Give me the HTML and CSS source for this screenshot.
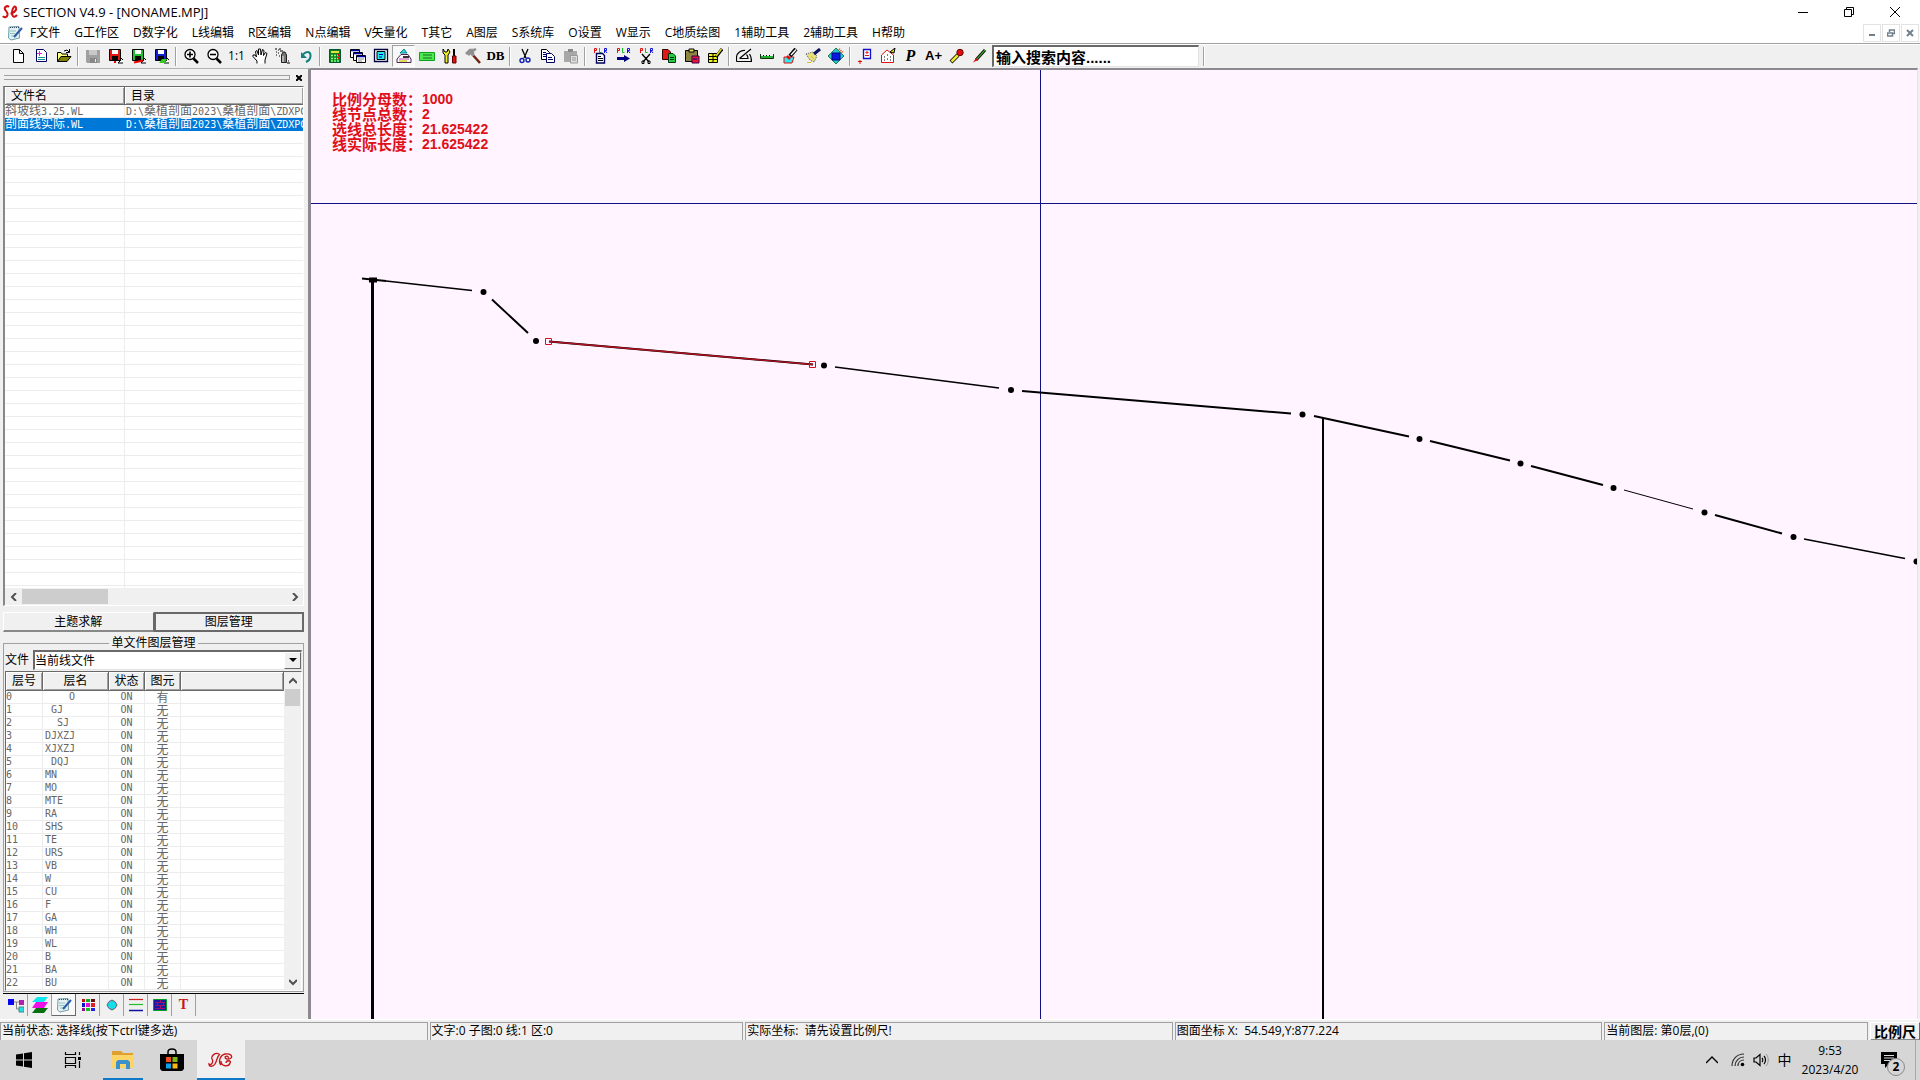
FILE: index.html
```html
<!DOCTYPE html>
<html lang="zh-CN">
<head>
<meta charset="utf-8">
<title>SECTION V4.9 - [NONAME.MPJ]</title>
<link rel="stylesheet" href="styles.css">
</head>
<body>
<header class="titlebar">
  <svg class="logo" viewBox="0 0 16 16"><path d="M7 3C5 1 2 3 3 5.500C4 7.500 6 8 5.500 11C5 13.500 2 14 1 12M8.500 9.500C12 9 15 6 14 3.500C13 1 10 4 10 8.500C10 13 12.500 14 15 11" fill="none" stroke="#d01010" stroke-width="2"/></svg>
  <h1 class="title">SECTION V4.9 - [NONAME.MPJ]</h1>
  <div class="winbtns">
    <button aria-label="最小化"><svg viewBox="0 0 10 10"><path d="M0 5.500H10" /></svg></button>
    <button aria-label="还原"><svg viewBox="0 0 10 10"><path d="M.5 2.500H7.500V9.500H.5ZM2.500 2.500V.5H9.500V7.500H7.500" /></svg></button>
    <button aria-label="关闭"><svg viewBox="0 0 10 10"><path d="M0 0L10 10M10 0L0 10" /></svg></button>
  </div>
</header>
<nav class="menubar">
  <svg class="note" viewBox="0 0 16 16"><path d="M2 2L12 1.500L12.500 13L4 15L1.500 13Z" fill="#e4f0f4" stroke="#6aa0a8"/><path d="M3 2.500H12" stroke="#446" stroke-dasharray="1 1"/><path d="M3 6H9M3 8.500H8M4 11H10" stroke="#8cc4b8"/><path d="M15 3L7 12" stroke="#2a5aa8" stroke-width="2"/></svg>
  <button>F文件</button><button>G工作区</button><button>D数字化</button><button>L线编辑</button><button>R区编辑</button><button>N点编辑</button><button>V矢量化</button><button>T其它</button><button>A图层</button><button>S系统库</button><button>O设置</button><button>W显示</button><button>C地质绘图</button><button>1辅助工具</button><button>2辅助工具</button><button>H帮助</button>
  <div class="mdibtns">
    <button aria-label="最小化窗口"><svg viewBox="0 0 8 8"><path d="M1 6H7" stroke-width="2"/></svg></button>
    <button aria-label="还原窗口"><svg viewBox="0 0 8 8"><path d="M2.500 3V1H7.500V4.500H6M.5 4H5.500V7H.5Z" stroke-width="1.500"/></svg></button>
    <button aria-label="关闭窗口"><svg viewBox="0 0 8 8"><path d="M1 1L7 7M7 1L1 7" stroke-width="2"/></svg></button>
  </div>
</nav>
<div class="toolbar" role="toolbar">
  <button aria-label="新建"><svg viewBox="0 0 16 16"><path d="M3.500 1.500H9.500L13.500 5.500V14.500H3.500ZM9.500 1.500V5.500H13.500" fill="#fff" stroke="#000"/></svg></button>
  <button aria-label="新建工程"><svg viewBox="0 0 16 16"><path d="M3.500 1.500H10.500L13.500 4.500V13.500H3.500Z" fill="#fff" stroke="#006"/><path d="M6.500 3V8M4 5.500H9" stroke="#e02ae0"/><path d="M5 9.500H12M5 11.500H12" stroke="#109090"/></svg></button>
  <button aria-label="打开"><svg viewBox="0 0 16 16"><path d="M1.500 13.500V4.500H5L6 6H11.500V8" fill="#ffff80" stroke="#000"/><path d="M1.500 13.500L5 8.500H15L11 13.500Z" fill="#808000" stroke="#000"/><path d="M8 3L11 2L13 4M13.500 1V4.500H10" fill="none" stroke="#000"/></svg></button>
  <i class="sep"></i>
  <button aria-label="保存"><svg viewBox="0 0 16 16"><path d="M1 2H15V15H2L1 14Z" fill="#a0a0a0"/><path d="M4 2H12V7H4Z" fill="#c8c8c8"/><path d="M5 10H12V15H5Z" fill="#888"/><path d="M10 11H11V14H10Z" fill="#eee"/></svg></button>
  <button aria-label="保存点"><svg viewBox="0 0 16 16"><path d="M1.500 1.500H12.500V12.500H1.500Z" fill="#e01818" stroke="#000"/><path d="M4 2H10V6H4Z" fill="#fff"/><path d="M4 8H10V13H4Z" fill="#000"/><path d="M12 9L15 12M13 12L10 15H15" fill="#fff" stroke="#000"/><path d="M6 13H8V15H6Z" fill="#e00"/></svg></button>
  <button aria-label="保存线"><svg viewBox="0 0 16 16"><path d="M1.500 1.500H12.500V12.500H1.500Z" fill="#20c030" stroke="#000"/><path d="M4 2H10V6H4Z" fill="#fff"/><path d="M4 8H10V12H4Z" fill="#000"/><path d="M12 9L15 12M13 12L10 15H15" fill="#fff" stroke="#000"/><path d="M3 14.500L12 12.500" stroke="#e00" stroke-width="2"/></svg></button>
  <button aria-label="保存区"><svg viewBox="0 0 16 16"><path d="M1.500 1.500H12.500V12.500H1.500Z" fill="#1020d0" stroke="#000"/><path d="M4 2H10V6H4Z" fill="#fff"/><path d="M4 8H10V12H4Z" fill="#000"/><path d="M12 9L15 12M13 12L10 15H15" fill="#fff" stroke="#000"/><path d="M5 15L8 11L13 11L11 15Z" fill="#38c820"/></svg></button>
  <i class="sep"></i>
  <button aria-label="放大"><svg viewBox="0 0 16 16"><path d="M10.500 10.500L15 15" stroke="#000" stroke-width="2.500"/><circle cx="7" cy="6.500" r="5" fill="#fff" stroke="#000" stroke-width="1.300"/><path d="M4 6.500H10M7 3.500V9.500" stroke="#000" stroke-width="1.600"/></svg></button>
  <button aria-label="缩小"><svg viewBox="0 0 16 16"><path d="M10.500 10.500L15 15" stroke="#000" stroke-width="2.500"/><circle cx="7" cy="6.500" r="5" fill="#fff" stroke="#000" stroke-width="1.300"/><path d="M4 6.500H10" stroke="#000" stroke-width="1.600"/></svg></button>
  <button class="one">1:1</button>
  <button aria-label="平移"><svg viewBox="0 0 16 16"><path d="M5 15.500V13L1 8.500V7H3L4.500 9L3.500 3.500L5 2.500L6.500 7L6.500 1L8.500 1L9 7L10.500 1.500L12 2.500L11.500 7.500L13.500 4.500L15 5.500L13 12V15.500" fill="#fff" stroke="#000"/></svg></button>
  <button aria-label="喷涂"><svg viewBox="0 0 16 16"><path d="M6.500 7L8 4H10L11.500 7V14.500H6.500Z" fill="#777" stroke="#222"/><path d="M8 8V14" stroke="#eee"/><path d="M0 1H2M3 2H4M1 4H2M4 1H6M5 3H8M3 5H4M1 7H2M4 8H5M13 13H14M12 15H15" stroke="#000"/></svg></button>
  <button aria-label="撤销"><svg viewBox="0 0 16 16"><path d="M4 8C7 3 12 3 12.500 7C13 11 10 13 8 14" fill="none" stroke="#108080" stroke-width="2"/><path d="M3 4V10H9Z" fill="#108080"/></svg></button>
  <i class="sep"></i>
  <button aria-label="计算器"><svg viewBox="0 0 16 16"><path d="M2.500 1.500H13.500V14.500H2.500Z" fill="#108020" stroke="#053"/><path d="M4 3H12V5H4Z" fill="#e0e040"/><path d="M4 7.500H12M4 10.500H12M4 13H12" stroke="#80ff80" stroke-width="1.500" stroke-dasharray="2 1"/><path d="M11 7H12M11 10H12" stroke="#e00" stroke-width="2"/></svg></button>
  <button aria-label="层叠窗口"><svg viewBox="0 0 16 16"><g fill="#fff" stroke="#000"><path d="M.5 1.500H9.500V9.500H.5Z"/><path d="M3.500 4.500H12.500V12.500H3.500Z"/><path d="M6.500 7.500H15.500V14.500H6.500Z"/></g><path d="M1 2.500H9M4 5.500H12M7 8.500H15" stroke="#0000a0" stroke-width="1.500"/><path d="M8 11H14M8 13H12" stroke="#888"/></svg></button>
  <button aria-label="窗口"><svg viewBox="0 0 16 16"><path d="M1.500 1.500H14.500V13.500H1.500Z" fill="#fff" stroke="#000040" stroke-width="1.300"/><path d="M4 3.500H12V11.500H4Z" fill="#20e8f0" stroke="#000"/><path d="M6 6.500H10M6 9H9" stroke="#0000a0"/></svg></button>
  <button class="pressed" aria-label="图车"><svg viewBox="0 0 16 16"><path d="M8 1L11 5H4Z" fill="#40d0e0" stroke="#088"/><path d="M1 14.500V11L5 6.500H12L15 11V14.500Z" fill="#fff" stroke="#502050"/><path d="M3 11H13" stroke="#c040b8"/><path d="M7 8H13V10H7Z" fill="#333"/><path d="M3 13H11" stroke="#d0d020" stroke-width="1.500"/></svg></button>
  <button aria-label="卡片"><svg viewBox="0 0 16 16"><path d="M.5 4.500H15.500V12.500H.5Z" fill="#50e850" stroke="#10a020"/><path d="M4 7H13M4 10H13" stroke="#107020"/></svg></button>
  <button aria-label="工具"><svg viewBox="0 0 16 16"><path d="M1 1L3 4H5L6 1L8 4L6 7V15H3V7L1 5Z" fill="#f0f020" stroke="#000"/><path d="M12 1V8" stroke="#000" stroke-width="2"/><path d="M10.500 8H14V15H10.500Z" fill="#e01010" stroke="#600"/></svg></button>
  <button aria-label="锤子"><svg viewBox="0 0 16 16"><path d="M7 6L15 15" stroke="#702010" stroke-width="2.500"/><path d="M1 6L5 2H9L11 1M3 7L8 3L8 8" fill="none" stroke="#909090" stroke-width="2.500"/></svg></button>
  <button class="db">DB</button>
  <i class="sep"></i>
  <button aria-label="剪切"><svg viewBox="0 0 16 16"><path d="M5 1L9 10M11 1L7 10" stroke="#000" stroke-width="1.300"/><circle cx="5" cy="12.500" r="2" fill="none" stroke="#1020b0" stroke-width="1.400"/><circle cx="11" cy="12" r="2" fill="none" stroke="#1020b0" stroke-width="1.400"/></svg></button>
  <button aria-label="复制"><svg viewBox="0 0 16 16"><path d="M1.500 1.500H6.500L9.500 4.500V11.500H1.500Z" fill="#fff" stroke="#000"/><path d="M6.500 5.500H11.500L14.500 8.500V14.500H6.500Z" fill="#fff" stroke="#000060"/><path d="M3 4.500H6M3 6.500H6M3 8.500H6M8 9.500H12M8 11.500H13" stroke="#000060"/></svg></button>
  <button aria-label="粘贴"><svg viewBox="0 0 16 16"><path d="M1 3H14V14H1Z" fill="#a8a8a8"/><path d="M5 1H10V4H5Z" fill="#888"/><path d="M7.500 7.500H14.500V15H7.500Z" fill="#ddd" stroke="#999"/><path d="M9 10H13M9 12H13" stroke="#999"/></svg></button>
  <i class="sep"></i>
  <button aria-label="点线区复制"><svg viewBox="0 0 16 16"><path d="M2.500 5V.5H4.500V2.500H3" fill="none" stroke="#e01010"/><path d="M7.500 0V4.500H9.500" fill="none" stroke="#10c020"/><path d="M12.500 5V.5H14.500V2.500H13L15 5" fill="none" stroke="#1010e0"/><path d="M4.500 5.500H10.500L12.500 7.500V15H4.500Z" fill="#fff" stroke="#000060" stroke-width="1.400"/><path d="M6 8.500H9M6 10.500H11M6 12.500H11" stroke="#000"/></svg></button>
  <button aria-label="点线区移动"><svg viewBox="0 0 16 16"><path d="M2.500 5V.5H4.500V2.500H3" fill="none" stroke="#e01010"/><path d="M7.500 0V4.500H9.500" fill="none" stroke="#10c020"/><path d="M12.500 5V.5H14.500V2.500H13L15 5" fill="none" stroke="#1010e0"/><path d="M2 9H9V7L15 10.500L9 14V12H2Z" fill="#000080"/></svg></button>
  <button aria-label="点线区剪切"><svg viewBox="0 0 16 16"><path d="M2.500 5V.5H4.500V2.500H3" fill="none" stroke="#e01010"/><path d="M7.500 0V4.500H9.500" fill="none" stroke="#10c020"/><path d="M12.500 5V.5H14.500V2.500H13L15 5" fill="none" stroke="#1010e0"/><path d="M4 6L11 14M12 6L5 14M8 9V12" stroke="#000" stroke-width="1.300"/><path d="M4 13H6V15.500H4ZM10 13H12V15.500H10Z" fill="none" stroke="#000"/></svg></button>
  <button aria-label="复制图元"><svg viewBox="0 0 16 16"><path d="M1.500 1.500H7L9.500 4V11.500H1.500Z" fill="#e01818" stroke="#300"/><path d="M7.500 5.500H12L14.500 8V14.500H7.500Z" fill="#20d040" stroke="#003010"/><path d="M9 9.500H13M9 11.500H13" stroke="#003010"/></svg></button>
  <button aria-label="粘贴图元"><svg viewBox="0 0 16 16"><path d="M1.500 2.500H13.500V13.500H1.500Z" fill="#8a8440" stroke="#000"/><path d="M5 1H10V4H5Z" fill="#e0e060" stroke="#000"/><path d="M8 8H15V15H8Z" fill="#e01840" stroke="#400040"/><path d="M9 11H13" stroke="#000080"/></svg></button>
  <button aria-label="属性表"><svg viewBox="0 0 16 16"><path d="M1.500 5.500H10.500V14.500H1.500Z" fill="#f0f020" stroke="#000"/><path d="M1 8.500H11M1 11.500H11M6 5V15" stroke="#000"/><path d="M15 1L9 9" stroke="#000" stroke-width="3"/><path d="M14.500 1L9 8" stroke="#e8e020" stroke-width="1.500"/></svg></button>
  <i class="sep"></i>
  <button aria-label="量角"><svg viewBox="0 0 16 16"><path d="M.5 13.500V9C1 5 5 2 9 2.500M.5 13.500H15.500C15.500 10 15 8 13.500 6M3.500 10.500L15 1M3.500 10.500H12C12 8.500 11.500 7.500 10.500 6.500" fill="none" stroke="#000" stroke-width="1.200"/></svg></button>
  <button aria-label="标尺"><svg viewBox="0 0 16 16"><path d="M1.500 6V10.500H14.500V6" fill="none" stroke="#103010"/><path d="M2 9H14" stroke="#20b030" stroke-width="2"/><path d="M4.500 7V8M7.500 7V8M10.500 7V8" stroke="#000"/></svg></button>
  <button aria-label="填色"><svg viewBox="0 0 16 16"><path d="M2 9H12L10 15H2Z" fill="#30e8f0" stroke="#e01010"/><path d="M14 1L8 8" stroke="#000" stroke-width="4"/><path d="M14 1.500L9 7" stroke="#fff" stroke-width="1.500"/><path d="M5 8L8 11" stroke="#e01010" stroke-width="2.500"/></svg></button>
  <button aria-label="刷子"><svg viewBox="0 0 16 16"><path d="M1 6L8 4L12 8L9 14L5 12Z" fill="#e8e080" stroke="#555" stroke-dasharray="1 1"/><path d="M9 6L15 1" stroke="#101060" stroke-width="3"/><path d="M2 14.500H6M6 8L9 11" stroke="#d0c020"/></svg></button>
  <button aria-label="图块"><svg viewBox="0 0 16 16"><path d="M8 0L16 8L8 16L0 8Z" fill="#20c8d0" stroke="#208050"/><path d="M4 5H12V12H4Z" fill="#0818e0" stroke="#000080"/><path d="M11 1L15 5" stroke="#e05020" stroke-dasharray="1 1" stroke-width="2"/></svg></button>
  <i class="sep"></i>
  <button aria-label="插入点"><svg viewBox="0 0 16 16"><path d="M6.500 1.500H13.500V10.500H6.500Z" fill="#fff" stroke="#1010d0" stroke-width="1.300"/><path d="M8 7.500H12M9 4H11V5H9Z" fill="none" stroke="#e01010"/><path d="M1 13.500H5M3 12V16" stroke="#e01010"/></svg></button>
  <button aria-label="多边形"><svg viewBox="0 0 16 16"><path d="M1.500 14.500V7L7 2L13.500 7V14.500Z" fill="#fff" stroke="#e01010"/><path d="M4 9H5M7 7H8M10 9H11M4 12H5M7 11H8M10 12H11" stroke="#000"/><path d="M10 4L15 0L14 5Z" fill="#e0e020" stroke="#000"/></svg></button>
  <button class="p">P</button>
  <button class="aplus">A+</button>
  <button aria-label="取色"><svg viewBox="0 0 16 16"><path d="M2 14L9 7" stroke="#000" stroke-width="4"/><path d="M2.500 13.500L9 7" stroke="#f0e830" stroke-width="2.500"/><circle cx="11" cy="4.500" r="3.200" fill="#e01010" stroke="#600"/></svg></button>
  <button aria-label="画笔"><svg viewBox="0 0 16 16"><path d="M4 12L13 2" stroke="#000" stroke-width="3"/><path d="M4.500 11.500L13 2" stroke="#40a030" stroke-width="1.200"/><path d="M1 14.500L4 10L6 12Z" fill="#e01010"/></svg></button>
  <input class="search" type="text" value="输入搜索内容......" aria-label="搜索">
  <i class="sep"></i>
</div>

<main class="main">
  <aside class="panel">
    <div class="grip"><i></i><button aria-label="关闭面板"><svg viewBox="0 0 6 6"><path d="M0 0L6 6M6 0L0 6" stroke="#000" stroke-width="2"/></svg></button></div>
    <section class="files">
      <div class="filesbody">
        <table class="filetable">
          <colgroup><col class="c-name"><col></colgroup>
          <thead><tr><th>文件名</th><th>目录</th></tr></thead>
          <tbody>
            <tr><td>斜坡线<span class="mono">3.25.WL</span></td><td><span class="mono">D:\</span>桑植剖面<span class="mono">2023\</span>桑植剖面<span class="mono">\ZDXPC</span></td></tr>
            <tr class="sel"><td>剖面线实际<span class="mono">.WL</span></td><td><span class="mono">D:\</span>桑植剖面<span class="mono">2023\</span>桑植剖面<span class="mono">\ZDXPC</span></td></tr>
          </tbody>
        </table>
        <div class="blank"></div>
      </div>
      <div class="hscroll"><button aria-label="向左"><svg viewBox="0 0 8 8"><path d="M6 0L2 4L6 8"/></svg></button><i></i><button aria-label="向右"><svg viewBox="0 0 8 8"><path d="M2 0L6 4L2 8"/></svg></button></div>
    </section>
    <div class="switch"><button>主题求解</button><button class="on">图层管理</button></div>
    <fieldset class="layers">
      <legend>单文件图层管理</legend>
      <div class="combo"><label for="file">文件</label><div class="selbox"><select id="file"><option>当前线文件</option></select><span class="drop"></span></div></div>
      <div class="layerframe">
        <table class="layertable">
          <colgroup><col class="l1"><col class="l2"><col class="l3"><col class="l3"><col></colgroup>
          <thead><tr><th>层号</th><th>层名</th><th>状态</th><th>图元</th><th></th></tr></thead>
          <tbody>
<tr><td>0</td><td>&nbsp;&nbsp;&nbsp;&nbsp;O</td><td>ON</td><td>有</td><td></td></tr>
<tr><td>1</td><td>&nbsp;GJ</td><td>ON</td><td>无</td><td></td></tr>
<tr><td>2</td><td>&nbsp;&nbsp;SJ</td><td>ON</td><td>无</td><td></td></tr>
<tr><td>3</td><td>DJXZJ</td><td>ON</td><td>无</td><td></td></tr>
<tr><td>4</td><td>XJXZJ</td><td>ON</td><td>无</td><td></td></tr>
<tr><td>5</td><td>&nbsp;DQJ</td><td>ON</td><td>无</td><td></td></tr>
<tr><td>6</td><td>MN</td><td>ON</td><td>无</td><td></td></tr>
<tr><td>7</td><td>MO</td><td>ON</td><td>无</td><td></td></tr>
<tr><td>8</td><td>MTE</td><td>ON</td><td>无</td><td></td></tr>
<tr><td>9</td><td>RA</td><td>ON</td><td>无</td><td></td></tr>
<tr><td>10</td><td>SHS</td><td>ON</td><td>无</td><td></td></tr>
<tr><td>11</td><td>TE</td><td>ON</td><td>无</td><td></td></tr>
<tr><td>12</td><td>URS</td><td>ON</td><td>无</td><td></td></tr>
<tr><td>13</td><td>VB</td><td>ON</td><td>无</td><td></td></tr>
<tr><td>14</td><td>W</td><td>ON</td><td>无</td><td></td></tr>
<tr><td>15</td><td>CU</td><td>ON</td><td>无</td><td></td></tr>
<tr><td>16</td><td>F</td><td>ON</td><td>无</td><td></td></tr>
<tr><td>17</td><td>GA</td><td>ON</td><td>无</td><td></td></tr>
<tr><td>18</td><td>WH</td><td>ON</td><td>无</td><td></td></tr>
<tr><td>19</td><td>WL</td><td>ON</td><td>无</td><td></td></tr>
<tr><td>20</td><td>B</td><td>ON</td><td>无</td><td></td></tr>
<tr><td>21</td><td>BA</td><td>ON</td><td>无</td><td></td></tr>
<tr><td>22</td><td>BU</td><td>ON</td><td>无</td><td></td></tr>
          </tbody>
        </table>
        <div class="vscroll"><button aria-label="向上"><svg viewBox="0 0 8 8"><path d="M0 6L4 2L8 6"/></svg></button><i></i><button aria-label="向下"><svg viewBox="0 0 8 8"><path d="M0 2L4 6L8 2"/></svg></button></div>
      </div>
    </fieldset>
    <div class="tabs">
      <button aria-label="工程"><svg viewBox="0 0 16 16"><path d="M6 5H11M8.500 5V12H11" fill="none" stroke="#888"/><path d="M0 2H6V8H0Z" fill="#0808f0"/><path d="M11 3H16V8H11Z" fill="#b020b0"/><path d="M11 10H16V15H11Z" fill="#20e0e8" stroke="#488"/></svg></button>
      <button aria-label="图层"><svg viewBox="0 0 16 16"><path d="M4 11H16L12 16H0Z" fill="#087010"/><path d="M4 5H16L12 11H0Z" fill="#f010e8"/><path d="M5 0H16L12 5H0Z" fill="#10e8f0"/></svg></button>
      <button class="on" aria-label="编辑"><svg viewBox="0 0 16 16"><path d="M2 2L12 1.500L12.500 13L4 15L1.500 13Z" fill="#e4f0f4" stroke="#6aa0a8"/><path d="M3 2.500H12" stroke="#446" stroke-dasharray="1 1"/><path d="M3 6H9M3 8.500H8M4 11H10" stroke="#8cc4b8"/><path d="M15 3L7 12" stroke="#2a5aa8" stroke-width="2"/></svg></button>
      <button aria-label="颜色"><svg viewBox="0 0 16 16"><path d="M2 2H5V5H2Z" fill="#c01010"/><path d="M11 2H15V5H11Z" fill="#601010"/><path d="M6 2H10V5H6Z" fill="#10b020"/><path d="M2 6H5V10H2Z" fill="#1010d0"/><path d="M6 6H10V10H6Z" fill="#e010d0"/><path d="M11 6H15V10H11Z" fill="#e02020"/><path d="M2 11H5V14H2Z" fill="#901090"/><path d="M6 11H10V14H6Z" fill="#10c020"/><path d="M11 11H15V14H11Z" fill="#2020e0"/></svg></button>
      <button aria-label="符号"><svg viewBox="0 0 16 16"><circle cx="8" cy="8" r="4.500" fill="#10e0e8" stroke="#904090"/><path d="M8 2.500V4M8 12V13.500M2.500 8H4M12 8H13.500" stroke="#10c020"/></svg></button>
      <button aria-label="线型"><svg viewBox="0 0 16 16"><path d="M1 2.500H15" stroke="#d02020" stroke-width="1.200"/><path d="M1 7.500H15" stroke="#20c020" stroke-width="1.200"/><path d="M1 13.500H15" stroke="#1010a0" stroke-width="1.500"/></svg></button>
      <button aria-label="图案"><svg viewBox="0 0 16 16"><path d="M1.500 2.500H14.500V13.500H1.500Z" fill="#1818a0" stroke="#00a020"/><path d="M3 5.500H13M3 8.500H13M3 11.500H13M8.500 3V5M5.500 6V8M11.500 6V8M8.500 9V11" stroke="#a01070"/></svg></button>
      <button class="t">T</button>
    </div>
  </aside>
  <section class="canvas">
    <dl class="info">
      <div><dt>比例分母数：</dt><dd>1000</dd></div>
      <div><dt>线节点总数：</dt><dd>2</dd></div>
      <div><dt>选线总长度：</dt><dd>21.625422</dd></div>
      <div><dt>线实际长度：</dt><dd>21.625422</dd></div>
    </dl>
    <svg class="drawing" viewBox="311 70 1606 949" preserveAspectRatio="xMinYMin slice">
      <path d="M311 203.500H1918M1040.500 70V1019" stroke="#101080"/>
      <g stroke="#000" fill="none" stroke-width="2">
        <path d="M372.500 280V1019" stroke-width="3"/>
        <path d="M1323 418V1019"/>
        <path d="M362 278.500L386 281" />
        <path d="M386 281L472 290.500M835 367L999 388" stroke-width="1.600"/>
        <path d="M492 299.500L528 333M549 341.500L813 364.500M1022 391L1291 413.500M1314 416L1409 436.500M1430 441L1510 460.500M1531 466L1603 485M1715 515L1782 533.500"/>
        <path d="M1624 490L1693 509" stroke-width="1"/>
        <path d="M1804 539L1905 558.500" stroke-width="1.600"/>
      </g>
      <path d="M549 341.500L813 364.500" stroke="#b01020" stroke-width="1.300"/>
      <path d="M545.500 338.500H551.500V344.500H545.500ZM809.500 361.500H815.500V367.500H809.500Z" fill="none" stroke="#d01020"/>
      <path d="M369 277.500H377V282.500H369Z"/>
      <g><circle cx="483.500" cy="292" r="3"/><circle cx="536" cy="341" r="3"/><circle cx="824" cy="365.500" r="3"/><circle cx="1011" cy="390" r="3"/><circle cx="1302.500" cy="414.500" r="3"/><circle cx="1419.500" cy="439" r="3"/><circle cx="1520.500" cy="463.500" r="3"/><circle cx="1613.500" cy="488" r="3"/><circle cx="1704.500" cy="512.500" r="3"/><circle cx="1793.500" cy="537" r="3"/><circle cx="1916.500" cy="561.500" r="3"/></g>
    </svg>
  </section>
</main>

<footer class="status">
  <span>当前状态: 选择线(按下ctrl键多选)</span><span>文字:0 子图:0 线:1 区:0</span><span>实际坐标:&nbsp; 请先设置比例尺!</span><span>图面坐标 X:&nbsp; 54.549,Y:877.224</span><span>当前图层: 第0层,(0)</span><button>比例尺</button>
</footer>
<nav class="taskbar">
  <button aria-label="开始"><svg width="16" height="16" viewBox="0 0 16 16"><path d="M0 2.500L7 1.500V7.500H0ZM8 1.300L16 0V7.500H8ZM0 8.500H7V14.500L0 13.500ZM8 8.500H16V16L8 14.700Z"/></svg></button>
  <button aria-label="任务视图"><svg width="18" height="16" viewBox="0 0 18 16"><path d="M1.500 0V2.500H11.500V0M1.500 5.500H11.500V11.500H1.500ZM1.500 16V13.500H11.500V16M15.500 0V3M15.500 9V16" fill="none" stroke="#000" stroke-width="1.200"/><path d="M14 5H17V8H14Z"/></svg></button>
  <button class="run" aria-label="文件资源管理器"><svg width="22" height="20" viewBox="0 0 22 20"><path d="M0 1H9L11 3H21V18H0Z" fill="#e0a030"/><path d="M0 5H22V18H0Z" fill="#fcd468"/><path d="M4 19V12L6 10H16L18 12V19H14V14H8V19Z" fill="#3c90cc"/></svg></button>
  <button aria-label="应用商店"><svg width="24" height="24" viewBox="0 0 24 24"><path d="M8 7V4C8 0 16 0 16 4V7" fill="none" stroke="#000" stroke-width="1.500"/><path d="M0 6H24V21L22 23H2L0 21Z"/><path d="M6 9H11V14H6Z" fill="#f05020"/><path d="M12.500 9H17.500V14H12.500Z" fill="#80b810"/><path d="M6 15.500H11V20.500H6Z" fill="#10a0e8"/><path d="M12.500 15.500H17.500V20.500H12.500Z" fill="#f8b810"/></svg></button>
  <button class="run active" aria-label="SECTION"><svg width="26" height="16" viewBox="0 0 26 16"><path d="M11 2C7 0 3 4 4 7C6 10 3 14 1 12C1 15 5 15 7 12C9 9 9 4 12 2M13 13C10 10 12 3 17 2C22 1 25 4 23 6C20 8 17 7 17 5C19 3 21 5 20 6M13 9C13 15 21 15 22 11C24 8 18 8 18 11" fill="none" stroke="#c41418" stroke-width="1.300"/></svg></button>
  <div class="tray">
    <button class="up" aria-label="显示隐藏的图标"><svg width="12" height="8" viewBox="0 0 12 8"><path d="M0 7L6 1L12 7" fill="none" stroke="#000" stroke-width="1.400"/></svg></button>
    <button aria-label="网络"><svg width="14" height="14" viewBox="0 0 14 14"><path d="M1 13C1 6 6 1 13 1M4 13C4 8 8 4 13 4M7 13C7 10 9 7 13 7" fill="none" stroke="#333" stroke-width="1.200"/><circle cx="11.500" cy="11.500" r="1.800"/></svg></button>
    <button aria-label="音量"><svg width="16" height="14" viewBox="0 0 16 14"><path d="M1 5H3L7 1.500V12.500L3 9H1ZM9 5C10 6 10 8 9 9M11 3C13 5 13 9 11 11" fill="none" stroke="#000" stroke-width="1.200"/><path d="M13 1C16 4 16 10 13 13" fill="none" stroke="#999"/></svg></button>
    <button class="ime">中</button>
    <button class="clock"><time>9:53</time><time>2023/4/20</time></button>
    <button class="notif" aria-label="通知"><svg width="16" height="16" viewBox="0 0 16 16"><path d="M0 0H16V12H8L4 16V12H0Z"/><path d="M3 3.500H13M3 6H13M3 8.500H9" stroke="#ddd"/></svg><b>2</b></button>
    <i class="desk"></i>
  </div>
</nav>
</body>
</html>
```
FILE: styles.css
```css
* { box-sizing: border-box; }
body {
  margin: 0;
  height: 100vh;
  display: flex;
  flex-direction: column;
  background: #f0f0f0;
  color: #000;
  font: 12px/14px "Open Sans", "Noto Sans CJK SC", sans-serif;
  overflow: hidden;
}
button {
  font: inherit;
  color: inherit;
  background: none;
  border: 0;
  padding: 0;
  margin: 0;
  display: flex;
  align-items: center;
  justify-content: center;
  white-space: nowrap;
}
svg { display: block; flex: none; }

.titlebar { display: flex; align-items: center; height: 23px; background: #fff; padding-left: 2px; flex: none; }
.logo { width: 16px; height: 16px; }
.title { margin: 0 0 0 5px; font: 13px/20px "Open Sans", sans-serif; }
.winbtns { margin-left: auto; display: flex; padding-right: 2px; height: 20px; }
.winbtns button { width: 46px; }
.winbtns svg { width: 10px; height: 10px; fill: none; stroke: #000; }

.menubar { display: flex; align-items: center; gap: 14px; height: 20px; padding-bottom: 1px; background: #fff; padding-left: 7px; flex: none; }
.menubar button { height: 19px; }
.note { width: 16px; height: 16px; margin-right: -7px; }
.mdibtns { margin-left: auto; display: flex; gap: 1px; padding-right: 1px; }
.mdibtns button { width: 18px; height: 18px; border: 1px solid #e3e3e3; }
.mdibtns svg { width: 8px; height: 8px; fill: none; stroke: #70808c; }

.toolbar { display: flex; align-items: center; height: 25px; padding-left: 6px; border-top: 1px solid #a0a0a0; box-shadow: inset 0 1px #fff; flex: none; }
.toolbar button { width: 23px; height: 22px; }
.toolbar svg { width: 16px; height: 16px; }
.toolbar .one { font: 12px/16px "Open Sans", sans-serif; }
.toolbar .db { font: bold 13px/16px "Liberation Serif", serif; }
.toolbar .p { font: italic bold 16px/16px "Liberation Serif", serif; }
.toolbar .aplus { font: bold 13px/16px "Liberation Sans", sans-serif; }
.toolbar .pressed { background: #f8f8f8; border: 1px solid #a0a0a0; border-right-color: #fff; border-bottom-color: #fff; }
.sep { width: 2px; height: 19px; margin: 0 2px; border-left: 1px solid #a0a0a0; border-right: 1px solid #fff; flex: none; }
.search {
  width: 207px; height: 22px; padding: 0 2px; margin: 0 2px 0 1px;
  border: 1px solid #e3e3e3; border-top: 2px solid #696969; border-left: 2px solid #696969;
  background: #fff; color: #000; outline: 0;
  font: bold 15px/18px "Liberation Sans", "Noto Sans CJK SC", sans-serif;
}

.main { flex: 1; min-height: 0; display: grid; grid-template-columns: 311px minmax(0, 1fr); }
.panel { display: flex; flex-direction: column; min-height: 0; padding: 0 4px 0 3px; border-right: 3px solid #8c8a90; border-top: 1px solid #b4b4b4; }
.grip { display: flex; align-items: center; gap: 6px; height: 17px; flex: none; }
.grip i { width: 286px; height: 5px; margin-left: 1px; border: 1px solid #a0a0a0; border-left: 0; }
.grip button { width: 6px; height: 12px; }
.grip svg { width: 6px; height: 6px; }

.files { flex: 1; min-height: 0; display: flex; flex-direction: column; border: 1px solid #fff; border-top-color: #696969; border-left: 2px solid #888; }
.filesbody { flex: 1; min-height: 0; display: flex; flex-direction: column; background: #fff; overflow: hidden; }
table { border-collapse: separate; border-spacing: 0; table-layout: fixed; width: 100%; }
.c-name { width: 120px; }
th { font-weight: normal; padding: 0; background: #f0f0f0; border-right: 1px solid #696969; border-bottom: 1px solid #696969; box-shadow: inset 1px 1px #fff, inset -1px -1px #a0a0a0; height: 18px; line-height: 16px; }
.filetable th { text-align: left; padding-left: 6px; }
.filetable th:last-child { border-right: 0; }
td { padding: 0; height: 13px; line-height: 12px; color: #666; white-space: nowrap; overflow: hidden; border-bottom: 1px solid #ececec; border-right: 1px solid #ececec; }
.filetable td:last-child { padding-left: 1px; border-right: 0; }
.mono { font: 10px/1px "DejaVu Sans Mono", monospace; }
.sel td { background: #0078d7; color: #fff; border-color: #0078d7; }
.blank {
  flex: 1;
  background:
    linear-gradient(#ececec, #ececec) 119px 0 / 1px 100% no-repeat,
    repeating-linear-gradient(#fff 0 12px, #ececec 12px 13px);
}
.hscroll { display: flex; height: 17px; background: #f0f0f0; flex: none; }
.hscroll button, .vscroll button { width: 17px; height: 17px; }
.hscroll i { width: 86px; height: 15px; margin: 1px auto 1px 0; background: #cdcdcd; }
.hscroll svg, .vscroll svg { width: 8px; height: 8px; fill: none; stroke: #505050; stroke-width: 2; }

.switch { display: grid; grid-template-columns: 1fr 1fr; height: 20px; margin: 6px 0 4px; flex: none; }
.switch button { border: 1px solid #fff; border-right-color: #696969; border-bottom: 2px solid #888; }
.switch .on { border: 2px solid #696969; }

.layers { margin: 0 0 1px; padding: 0 1px; border: 1px solid #a0a0a0; min-width: 0; flex: none; }
.layers legend { height: 14px; padding: 0 2px; margin: 0 auto; }
.combo { display: flex; align-items: center; gap: 4px; height: 20px; }
.selbox { flex: 1; position: relative; height: 20px; background: #fff; border: 1px solid #e3e3e3; border-top: 2px solid #696969; border-left: 2px solid #696969; }
select { width: 100%; height: 17px; appearance: none; border: 0; background: none; padding: 0; font: inherit; color: #000; outline: 0; display: block; }
.drop { position: absolute; top: 0; right: 0; width: 17px; height: 17px; background: #f0f0f0; border: 1px solid #fff; border-right-color: #696969; border-bottom-color: #696969; pointer-events: none; }
.drop::after { content: ""; display: block; width: 0; margin: 5px auto; border: 4px solid transparent; border-top-color: #000; border-bottom: 0; }
.layerframe { display: flex; height: 320px; margin-top: 1px; background: #fff; border: 1px solid #fff; border-top-color: #696969; border-left-color: #696969; overflow: hidden; }
.layertable { flex: 1; min-width: 0; width: auto; }
.layertable th { height: 19px; }
.l1 { width: 37px; }
.l2 { width: 66px; }
.l3 { width: 36px; }
.layertable td { font: 10px/12px "DejaVu Sans Mono", monospace; }
.layertable td:nth-child(2) { padding-left: 2px; }
.layertable td:nth-child(3) { text-align: center; }
.layertable td:nth-child(4) { text-align: center; font: 12px/12px "Noto Sans CJK SC", sans-serif; }
.layertable td:last-child { border-right: 0; }
.vscroll { width: 17px; display: flex; flex-direction: column; background: #f0f0f0; flex: none; }
.vscroll i { height: 17px; margin: 0 1px auto; background: #cdcdcd; }

.tabs { display: flex; align-items: flex-start; height: 26px; border-top: 1px solid #000; padding-left: 1px; flex: none; }
.tabs button { width: 24px; height: 22px; border-right: 1px solid #a0a0a0; }
.tabs svg { width: 16px; height: 16px; }
.tabs .on { background: #f8f8f8; border-bottom: 1px solid #696969; border-right-color: #696969; }
.tabs .t { font: bold 14px/16px "Liberation Serif", serif; color: #c81818; }

.canvas { position: relative; min-width: 0; min-height: 0; margin-right: 2px; background: #fff4ff; border-top: 2px solid #8c8a90; border-right: 1px solid #e8e0e8; overflow: hidden; }
.drawing { width: 100%; height: 100%; }
.info { position: absolute; left: 21px; top: 21px; margin: 0; color: #e01018; font: bold 15px/15px "Noto Sans CJK SC", sans-serif; }
.info div { display: flex; }
.info dd { margin: 0; font: bold 14px/16px "Liberation Sans", sans-serif; height: 15px; }

.status { display: grid; grid-template-columns: 428fr 314fr 428fr 428fr 264fr 50px; gap: 2px; height: 21px; padding-top: 2px; border-top: 1px solid #fff; flex: none; }
.status span { border: 1px solid #a0a0a0; padding: 0 1px; line-height: 16px; white-space: nowrap; overflow: hidden; }
.status button { font: bold 14px/16px "Noto Sans CJK SC", sans-serif; border: 1px solid #fff; border-right-color: #696969; border-bottom: 2px solid #888; }

.taskbar { display: flex; height: 40px; background: #d6d6d6; flex: none; }
.taskbar > button { width: 48px; height: 40px; margin-right: 1px; }
.taskbar > button:nth-child(2) { margin-right: 2px; }
.taskbar > .run { background: linear-gradient(#1078c8, #1078c8) center bottom / 40px 2px no-repeat; }
.taskbar > .active { background: linear-gradient(#1078c8, #1078c8) center bottom / 48px 2px no-repeat #f0f0f0; }
.tray { margin-left: auto; display: flex; align-items: center; }
.tray button { width: 23px; height: 40px; }
.tray .up { width: 28px; }
.tray .ime { width: 25px; font-size: 14px; }
.tray .clock { width: 66px; flex-direction: column; line-height: 19px; }
.tray .notif { position: relative; width: 52px; }
.notif b { position: absolute; left: 24px; top: 18px; width: 18px; height: 18px; border: 1px solid #888; border-radius: 9px; background: #d6d6d6; font: bold 12px/16px "Open Sans", sans-serif; }
.desk { width: 5px; height: 40px; border-left: 1px solid #a8a8a8; }
```
